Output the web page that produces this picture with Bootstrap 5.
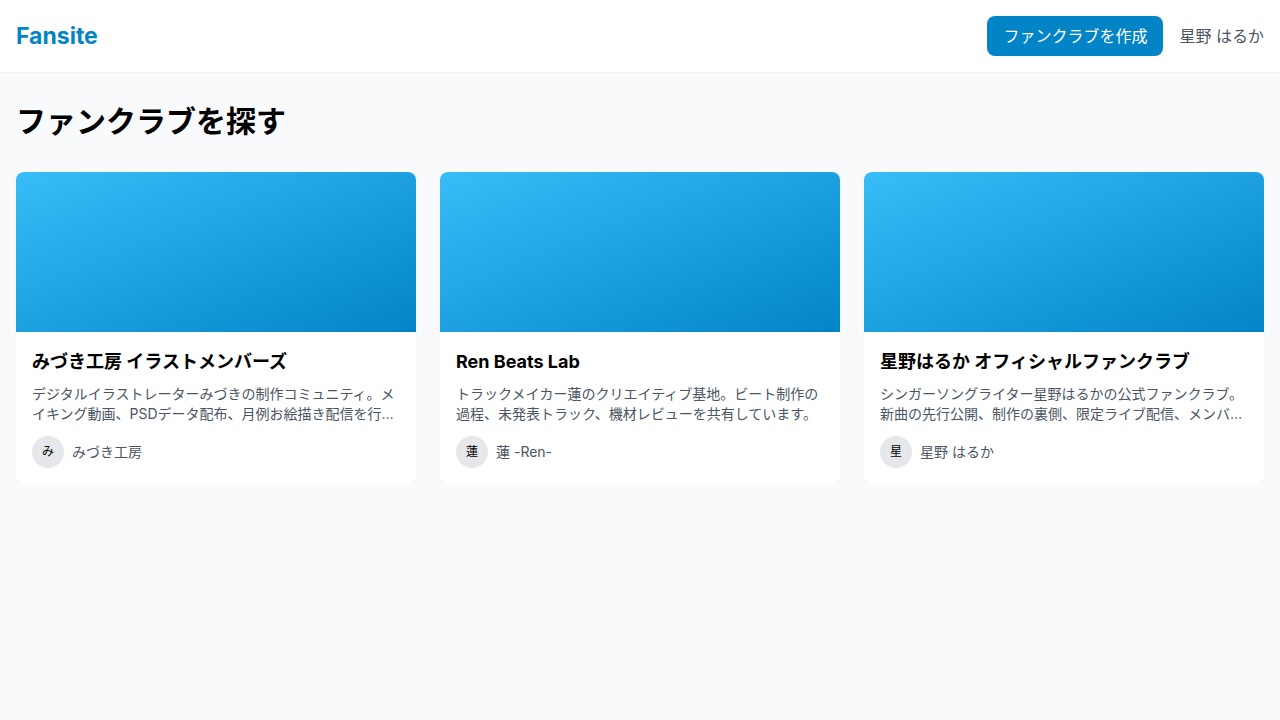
<!DOCTYPE html>
<html lang="ja">
<head>
<meta charset="utf-8">
<meta name="viewport" content="width=device-width, initial-scale=1">
<title>Fansite</title>
<link href="https://cdn.jsdelivr.net/npm/bootstrap@5.3.0/dist/css/bootstrap.min.css" rel="stylesheet">
<style>
body { font-family: Inter, "Noto Sans CJK JP", sans-serif; background: #f9fafb; color: #000; }
.site-header { box-shadow: 0 1px 2px rgba(0,0,0,.05); }
.brand { font-size: 23px; line-height: 32px; color: #0284c7; }
.btn-create { background: #0284c7; color: #fff; border: 0; border-radius: 8px; padding: 8px 16px; line-height: 24px; }
.btn-create:hover { background: #0369a1; color: #fff; }
.user-link, .club-text, .club-owner { color: #4b5563; }
.page-title { font-size: 30px; line-height: 34px; margin-bottom: 34px; }
.club { border-radius: 8px; box-shadow: 0 1px 2px rgba(0,0,0,.05); color: #000; }
.club-cover { height: 160px; background: linear-gradient(to bottom right, #38bdf8, #0284c7); }
.club-name { font-size: 18px; line-height: 28px; }
.club-text { font-size: 14px; line-height: 20px; margin-bottom: 12px; }
.club-owner { font-size: 14px; line-height: 20px; }
.avatar { width: 32px; height: 32px; background: #e5e7eb; font-size: 12px; line-height: 16px; }
</style>
</head>
<body>
<header class="site-header bg-white">
  <nav class="d-flex justify-content-between align-items-center p-3">
    <a href="#" class="brand fw-bold text-decoration-none">Fansite</a>
    <div class="d-flex align-items-center gap-3">
      <button type="button" class="btn btn-create">ファンクラブを作成</button>
      <a href="#" class="user-link text-decoration-none">星野 はるか</a>
    </div>
  </nav>
</header>
<main class="container-fluid px-3 pt-4 mt-2">
  <h1 class="page-title fw-bold">ファンクラブを探す</h1>
  <div class="row row-cols-1 row-cols-md-2 row-cols-lg-3 g-4">
    <div class="col">
      <a href="#" class="club d-block bg-white overflow-hidden text-decoration-none">
        <div class="club-cover"></div>
        <div class="p-3">
          <h2 class="club-name fw-bold mb-2">みづき工房 イラストメンバーズ</h2>
          <p class="club-text">デジタルイラストレーターみづきの制作コミュニティ。メイキング動画、PSDデータ配布、月例お絵描き配信を行…</p>
          <div class="d-flex align-items-center gap-2">
            <span class="avatar rounded-circle d-flex align-items-center justify-content-center">み</span>
            <span class="club-owner">みづき工房</span>
          </div>
        </div>
      </a>
    </div>
    <div class="col">
      <a href="#" class="club d-block bg-white overflow-hidden text-decoration-none">
        <div class="club-cover"></div>
        <div class="p-3">
          <h2 class="club-name fw-bold mb-2">Ren Beats Lab</h2>
          <p class="club-text">トラックメイカー蓮のクリエイティブ基地。ビート制作の過程、未発表トラック、機材レビューを共有しています。</p>
          <div class="d-flex align-items-center gap-2">
            <span class="avatar rounded-circle d-flex align-items-center justify-content-center">蓮</span>
            <span class="club-owner">蓮 -Ren-</span>
          </div>
        </div>
      </a>
    </div>
    <div class="col">
      <a href="#" class="club d-block bg-white overflow-hidden text-decoration-none">
        <div class="club-cover"></div>
        <div class="p-3">
          <h2 class="club-name fw-bold mb-2">星野はるか オフィシャルファンクラブ</h2>
          <p class="club-text">シンガーソングライター星野はるかの公式ファンクラブ。新曲の先行公開、制作の裏側、限定ライブ配信、メンバ…</p>
          <div class="d-flex align-items-center gap-2">
            <span class="avatar rounded-circle d-flex align-items-center justify-content-center">星</span>
            <span class="club-owner">星野 はるか</span>
          </div>
        </div>
      </a>
    </div>
  </div>
</main>
<script src="https://cdn.jsdelivr.net/npm/bootstrap@5.3.0/dist/js/bootstrap.bundle.min.js"></script>
</body>
</html>
